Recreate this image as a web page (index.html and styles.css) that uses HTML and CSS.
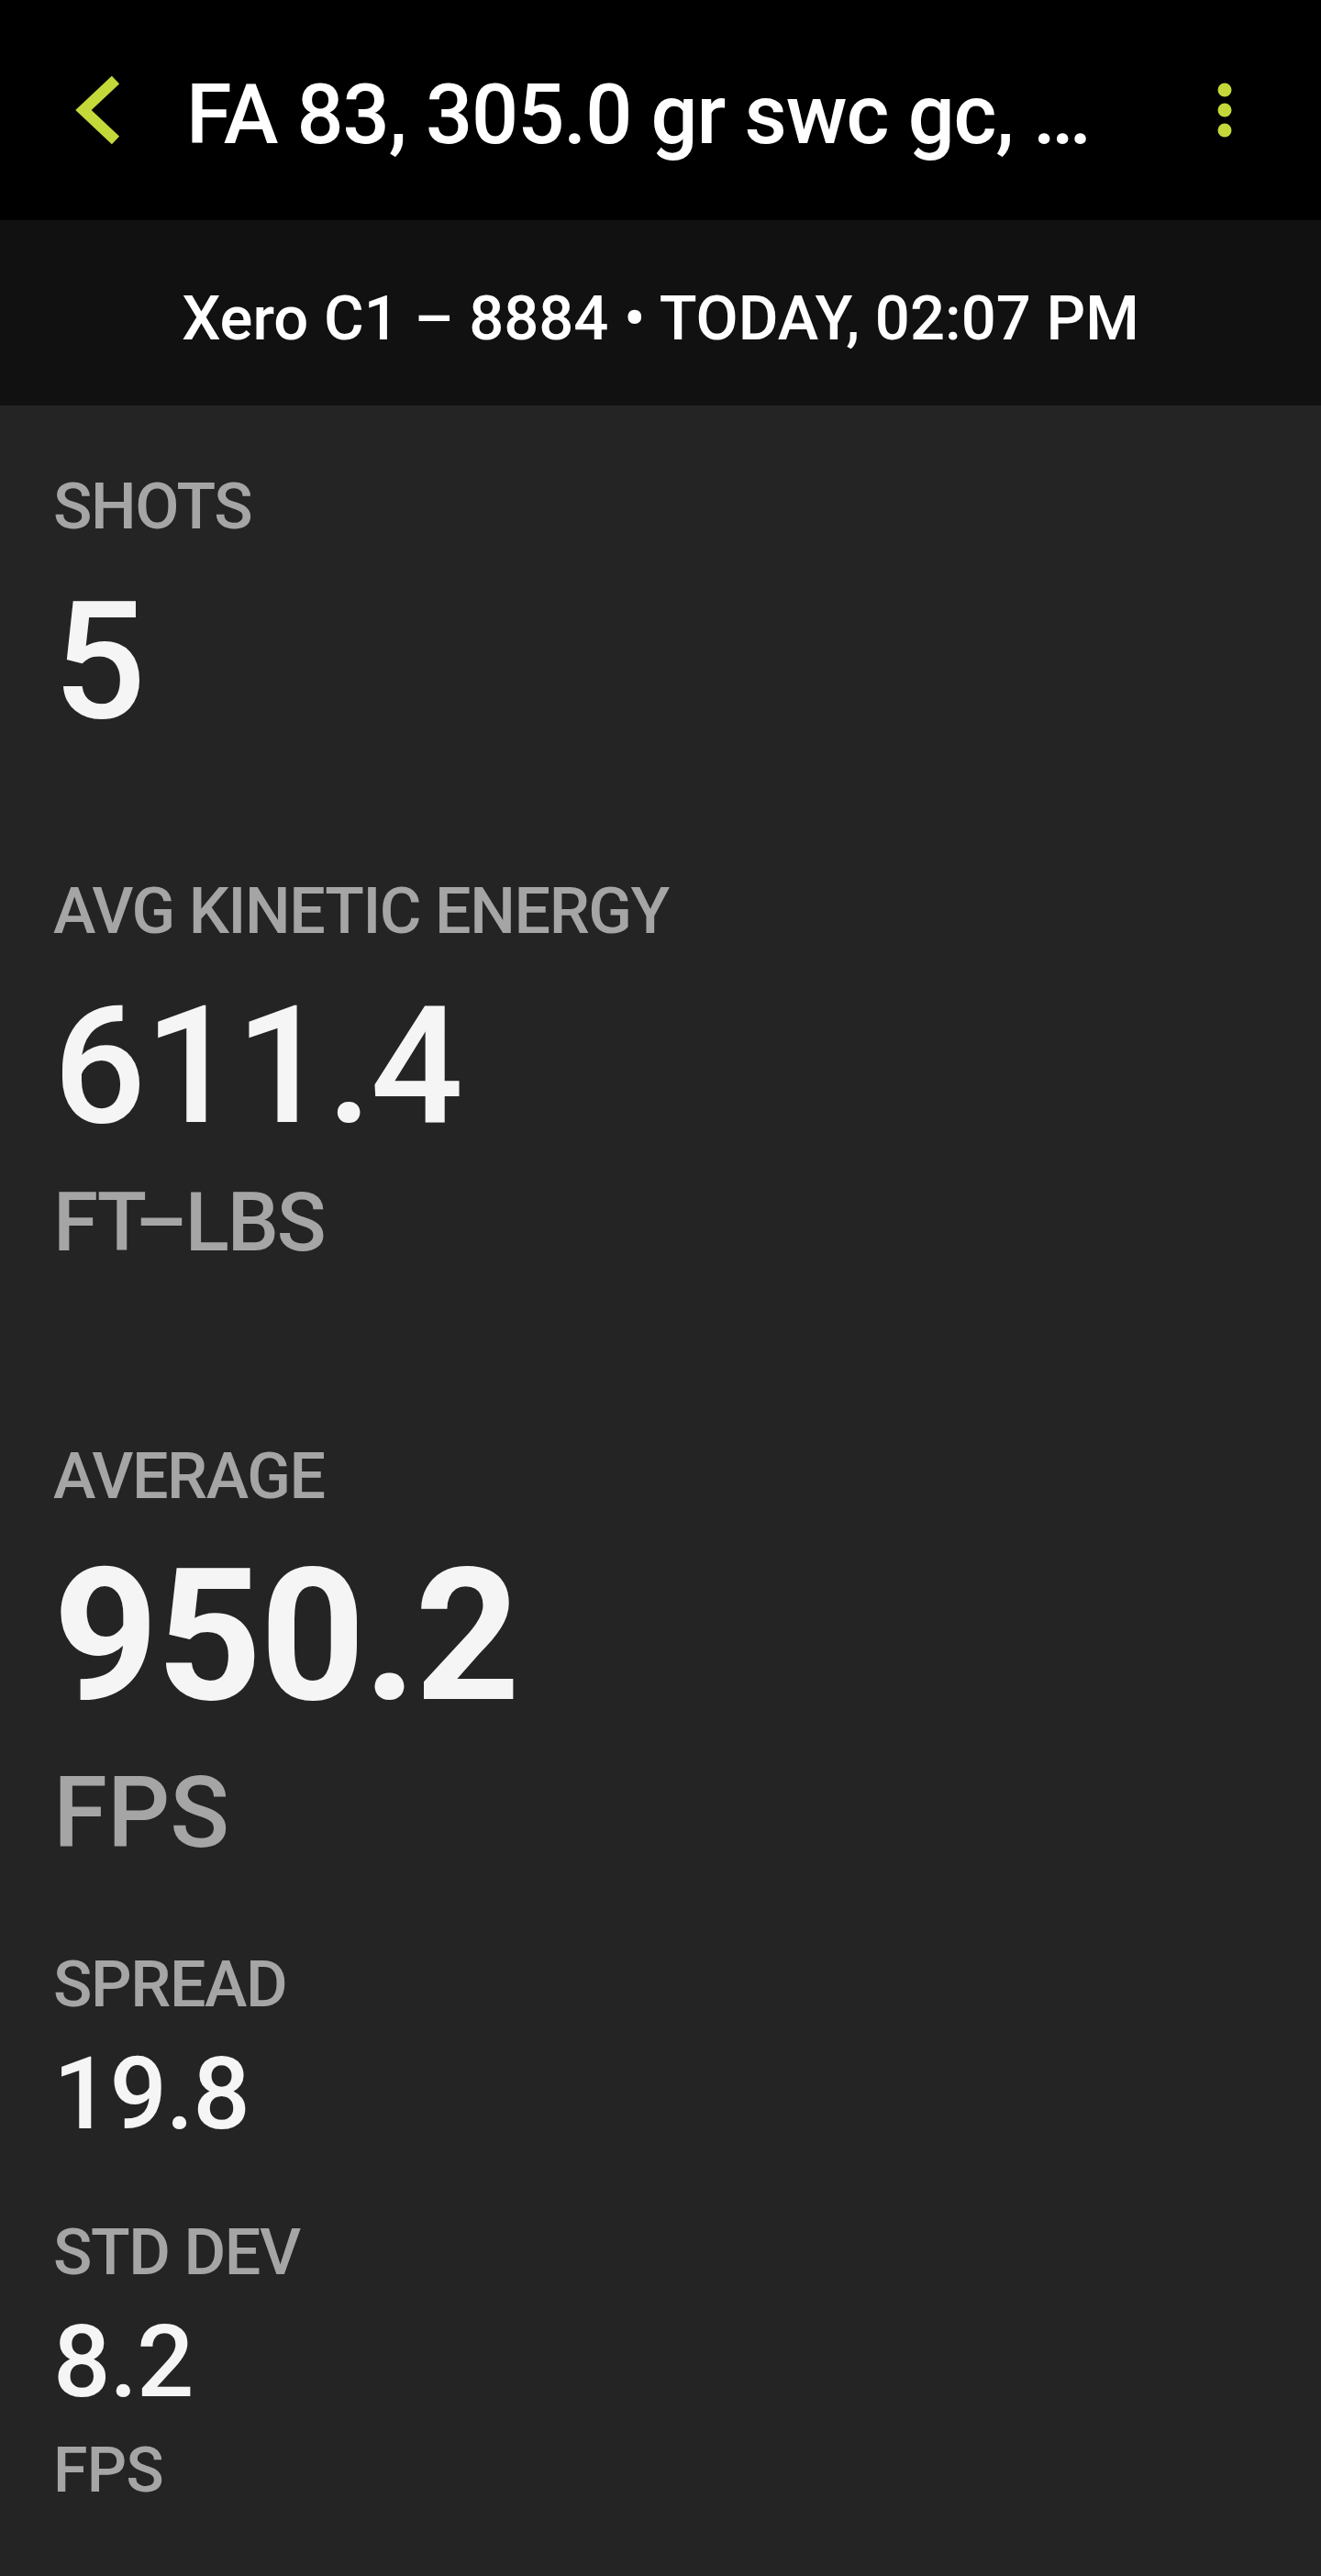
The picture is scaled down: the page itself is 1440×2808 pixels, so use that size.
FILE: index.html
```html
<!DOCTYPE html>
<html lang="en">
<head>
    <meta charset="UTF-8">
    <meta name="viewport" content="width=device-width, initial-scale=1.0">
    <title>Session Detail</title>
    <link rel="stylesheet" href="styles.css">
</head>
<body>
    <!-- Top bar -->
    <header class="top-bar">
        <svg class="back-icon" width="50" height="80" viewBox="0 0 50 80">
            <polyline points="46,7 11,40 46,73" fill="none" stroke="#c4d83a" stroke-width="12"/>
        </svg>
        <h1 class="title">FA 83, 305.0 gr swc gc, …</h1>
        <svg class="menu-icon" width="20" height="64" viewBox="0 0 20 64">
            <circle cx="10" cy="10" r="7.5" fill="#c4d83a"/>
            <circle cx="10" cy="32" r="7.5" fill="#c4d83a"/>
            <circle cx="10" cy="54" r="7.5" fill="#c4d83a"/>
        </svg>
    </header>

    <!-- Device and date -->
    <div class="sub-bar">Xero C1 – 8884 • TODAY, 02:07 PM</div>

    <!-- Stats -->
    <main class="stats">
        <div class="label">SHOTS</div>
        <div class="value big shots">5</div>

        <div class="label ke-label">AVG KINETIC ENERGY</div>
        <div class="value big">611.4</div>
        <div class="unit">FT–LBS</div>

        <div class="label avg-label">AVERAGE</div>
        <div class="value huge">950.2</div>
        <div class="unit large">FPS</div>

        <div class="label spread-label">SPREAD</div>
        <div class="value small">19.8</div>

        <div class="label sd-label">STD DEV</div>
        <div class="value small">8.2</div>
        <div class="unit tiny">FPS</div>
    </main>
</body>
</html>
```

FILE: styles.css
```css
/* Base */
body {
    font-family: Roboto, "Noto Sans", Arial, sans-serif;
    margin: 0;
    background-color: #242424;
    color: #f5f5f5;
}

/* Top bar */
.top-bar {
    height: 240px;
    background-color: #000;
    display: flex;
    align-items: center;
    box-sizing: border-box;
}
.back-icon {
    margin-left: 80px;
    flex-shrink: 0;
}
.title {
    flex: 1;
    margin: 0 0 0 73px;
    padding-top: 12px;
    font-size: 90px;
    font-weight: 500;
    line-height: 106px;
    letter-spacing: -0.012em;
    color: #fff;
    white-space: nowrap;
    overflow: hidden;
}
.menu-icon {
    margin-right: 95px;
    flex-shrink: 0;
}

/* Device / date bar */
.sub-bar {
    height: 202px;
    box-sizing: border-box;
    padding-top: 12px;
    background-color: #111;
    display: flex;
    align-items: center;
    justify-content: center;
    font-size: 67px;
    font-weight: 500;
    color: #fff;
}

/* Stats list */
.stats {
    padding: 69px 58px 0;
}
.label {
    font-size: 70px;
    line-height: 82px;
    font-weight: 500;
    letter-spacing: -0.02em;
    color: #a5a5a5;
}
.value {
    font-weight: 500;
    letter-spacing: -0.01em;
    color: #f5f5f5;
}
.value.big {
    font-size: 178px;
    line-height: 200px;
    margin-top: 28px;
}
.value.huge {
    font-size: 200px;
    line-height: 224px;
    font-weight: 700;
    margin-top: 22px;
}
.value.small {
    font-size: 110px;
    line-height: 128px;
    margin-top: 15px;
}
.unit {
    font-size: 89px;
    line-height: 104px;
    font-weight: 500;
    letter-spacing: -0.025em;
    color: #a5a5a5;
    margin-top: 19px;
}
.unit.large {
    font-size: 107px;
    line-height: 124px;
    letter-spacing: 0;
}
.unit.tiny {
    font-size: 68px;
    line-height: 80px;
    letter-spacing: -0.01em;
    margin-top: 14px;
}

.ke-label { margin-top: 131px; }
.avg-label { margin-top: 183px; }
.spread-label { margin-top: 83px; }
.sd-label { margin-top: 67px; }
```
